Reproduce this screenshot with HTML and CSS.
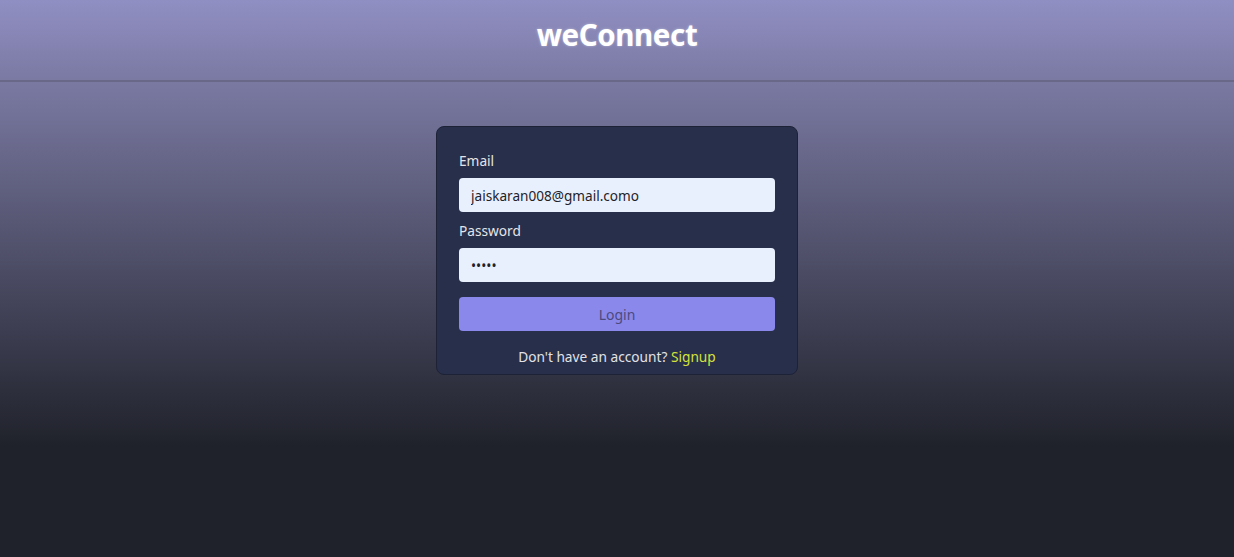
FILE: index.html
```html
<!DOCTYPE html>
<html>
<head>
<meta charset="utf-8">
<link rel="stylesheet" href="styles.css">
</head>
<body>
<header class="topbar"><h1 class="brand">weConnect</h1></header>
<main class="main">
  <form class="card">
    <label class="label" for="email">Email</label>
    <input class="field" id="email" type="text" value="jaiskaran008@gmail.como">
    <label class="label" for="pw">Password</label>
    <input class="field" id="pw" type="password" value="12345">
    <button class="btn" type="button">Login</button>
    <p class="foot">Don't have an account? <a class="link" href="#">Signup</a></p>
  </form>
</main>
</body>
</html>
```
FILE: styles.css
```css
html, body { margin: 0; padding: 0; height: 100%; }
body {
  font-family: "Noto Sans", "Open Sans", sans-serif;
  background: linear-gradient(180deg, #908fc3 0px, #7a79a2 82px, #20222b 445px, #20222b 100%) no-repeat;
  background-color: #20222b;
  min-height: 557px;
}
.topbar {
  height: 80px;
  border-bottom: 2px solid #6a6889;
  display: flex;
  align-items: center;
  justify-content: center;
  box-sizing: content-box;
}
.brand {
  margin: 0;
  margin-top: -11px;
  font-size: 29.5px;
  font-weight: 700;
  color: #fff;
  text-shadow: 0 0 3px rgba(255,255,255,0.4);
  letter-spacing: -0.4px;
}
.main {
  display: flex;
  justify-content: center;
  padding-top: 44px;
}
.card {
  width: 362px;
  box-sizing: border-box;
  background: #272f4a;
  border: 1px solid #1d2236;
  border-radius: 8px;
  padding: 24px 22px 7px 22px;
  display: flex;
  flex-direction: column;
}
.label {
  color: #e4e4e8;
  font-size: 13.7px;
  line-height: 20px;
  margin-bottom: 7px;
}
.field {
  height: 34px;
  box-sizing: border-box;
  border: none;
  border-radius: 4px;
  background: #e8f0fe;
  padding: 0 12px;
  font-family: inherit;
  font-size: 13.6px;
  color: #1f2328;
  margin-bottom: 9px;
  outline: none;
}
.btn {
  margin-top: 6px;
  height: 34px;
  border: none;
  border-radius: 4px;
  background: #8b88ec;
  color: #4b4a80;
  font-family: inherit;
  font-size: 14px;
}
.foot {
  margin: 16px 0 0 0;
  text-align: center;
  color: #e2e2e6;
  font-size: 13.7px;
  line-height: 20px;
}
.link { color: #d5e23c; text-decoration: none; }
```
